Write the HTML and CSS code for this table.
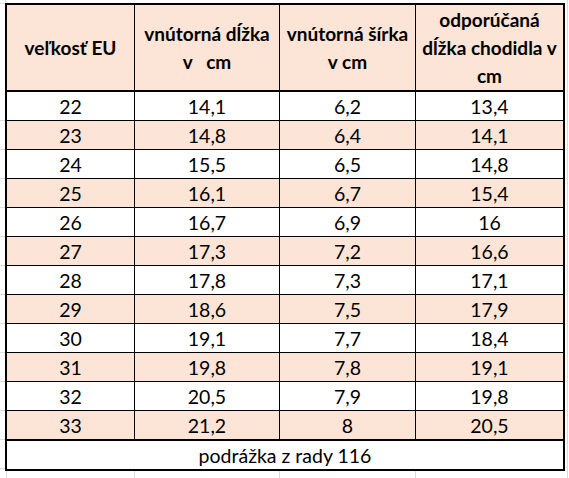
FILE: index.html
```html
<!DOCTYPE html>
<html lang="sk">
<head>
  <meta charset="UTF-8">
  <meta name="viewport" content="width=device-width, initial-scale=1.0">
  <title>Veľkostná tabuľka</title>
  <link rel="stylesheet" href="styles.css">
</head>
<body>
  <div class="sheet">
    <table class="sizes">
      <thead>
        <tr>
          <th class="c1">veľkosť EU</th>
          <th class="c2">vnútorná dĺžka<br>v&nbsp;&nbsp;&nbsp;cm</th>
          <th class="c3">vnútorná šírka<br>v cm</th>
          <th class="c4">odporúčaná<br>dĺžka chodidla v<br>cm</th>
        </tr>
      </thead>
      <tbody>
        <tr><td>22</td><td>14,1</td><td>6,2</td><td>13,4</td></tr>
        <tr class="fill"><td>23</td><td>14,8</td><td>6,4</td><td>14,1</td></tr>
        <tr><td>24</td><td>15,5</td><td>6,5</td><td>14,8</td></tr>
        <tr class="fill"><td>25</td><td>16,1</td><td>6,7</td><td>15,4</td></tr>
        <tr><td>26</td><td>16,7</td><td>6,9</td><td>16</td></tr>
        <tr class="fill"><td>27</td><td>17,3</td><td>7,2</td><td>16,6</td></tr>
        <tr><td>28</td><td>17,8</td><td>7,3</td><td>17,1</td></tr>
        <tr class="fill"><td>29</td><td>18,6</td><td>7,5</td><td>17,9</td></tr>
        <tr><td>30</td><td>19,1</td><td>7,7</td><td>18,4</td></tr>
        <tr class="fill"><td>31</td><td>19,8</td><td>7,8</td><td>19,1</td></tr>
        <tr><td>32</td><td>20,5</td><td>7,9</td><td>19,8</td></tr>
        <tr class="fill last"><td>33</td><td>21,2</td><td>8</td><td>20,5</td></tr>
      </tbody>
      <tfoot>
        <tr><td colspan="4">podrážka z rady 116</td></tr>
      </tfoot>
    </table>
  </div>
</body>
</html>
```

FILE: styles.css
```css
body {
  margin: 0;
  padding: 0;
  background: #fff;
  font-family: Lato, "Open Sans", sans-serif;
  color: #000;
}

/* light spreadsheet gridlines around the table */
.sheet {
  padding: 3px 0 7px 5px;
  background:
    linear-gradient(#dadada, #dadada) 567px 0 / 1px 100% no-repeat,
    linear-gradient(#dadada, #dadada) 0 3px / 5px 1px no-repeat,
    linear-gradient(#dadada, #dadada) 5px 0 / 1px 3px no-repeat,
    linear-gradient(#dadada, #dadada) 6px 100% / 1px 7px no-repeat,
    linear-gradient(#dadada, #dadada) 134px 100% / 1px 7px no-repeat,
    linear-gradient(#dadada, #dadada) 279px 100% / 1px 7px no-repeat,
    linear-gradient(#dadada, #dadada) 415px 100% / 1px 7px no-repeat,
    repeating-linear-gradient(to bottom, transparent 0, transparent 28px, #dadada 28px, #dadada 29px) 0 92px / 5px 380px no-repeat;
}

.sizes {
  border-collapse: separate;
  border-spacing: 0;
  table-layout: fixed;
  width: 560px;
  border: 2px solid #000;
  box-sizing: border-box;
  background: #fff;
}

.sizes th,
.sizes td {
  box-sizing: border-box;
  padding: 0;
  text-align: center;
  vertical-align: middle;
  border-right: 1px solid #000;
  border-bottom: 1px solid #000;
}

.sizes th:last-child,
.sizes td:last-child {
  border-right: none;
}

.sizes th {
  height: 87px;
  background: #fce4d6;
  border-bottom-width: 2px;
  font-size: 19px;
  font-weight: bold;
  line-height: 28px;
}

.c1 { width: 128px; }
.c2 { width: 145px; }
.c3 { width: 136px; }
.c4 { width: 147px; }

.sizes tbody td {
  height: 29px;
  padding-top: 2px;
  font-size: 19.5px;
  line-height: 26px;
}

.sizes tbody tr.fill td {
  background: #fce4d6;
}

.sizes tbody tr.last td {
  height: 30px;
  border-bottom-width: 2px;
}

.sizes tfoot td {
  height: 28px;
  border-bottom: none;
  padding-top: 2px;
  font-size: 19.5px;
  line-height: 26px;
}
```
